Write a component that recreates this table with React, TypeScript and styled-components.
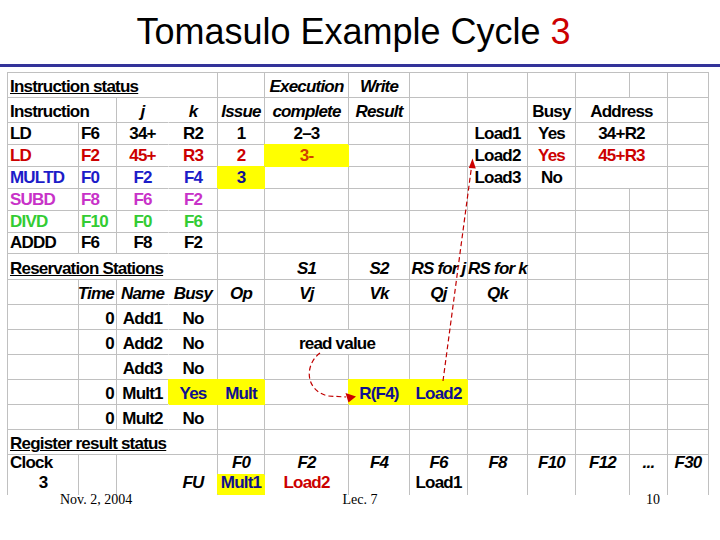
import React from 'react';
import styled, { createGlobalStyle, css } from 'styled-components';

const GlobalStyle = createGlobalStyle`
  html, body { margin: 0; padding: 0; background: #ffffff; }
  body { width: 720px; height: 540px; overflow: hidden; }
`;

const GRID = '#c0c0c0';
const RED = '#cc0000';
const BLUE = '#1c1cc8';
const NAVY = '#10108f';
const MAGENTA = '#c832c8';
const GREEN = '#33cc33';
const ORANGE = '#d04000';
const YELLOW = '#ffff00';

const Slide = styled.div`
  position: relative;
  width: 720px;
  height: 540px;
  background: #ffffff;
  font-family: "Liberation Sans", Arial, sans-serif;
`;

const Title = styled.h1`
  margin: 0;
  padding: 11px 13px 0 0;
  font-family: "Liberation Sans", Arial, sans-serif;
  font-weight: normal;
  font-size: 36px;
  line-height: 41px;
  text-align: center;
  color: #000000;
`;

const Accent = styled.span`
  color: ${RED};
`;

const Rule = styled.div`
  margin-top: 12px;
  height: 3px;
  background: #333399;
`;

const Table = styled.div`
  margin: 5px 0 0 7px;
  display: grid;
  width: max-content;
  grid-template-columns: 71px 38px 52px 49px 47px 84px 61px 58px 60px 48px 54px 38px 41px;
  grid-template-rows: 25px 25px 22px 22px 22px 22px 22px 21px 26px 25px 25px 25px 25px 25px 25px 25px 20px 20px;
  border-left: 1px solid ${GRID};
  border-top: 1px solid ${GRID};
`;

type Align = 'l' | 'c' | 'r';

const Cell = styled.div<{
  $span: number;
  $align: Align;
  $italic: boolean;
  $color: string;
  $hl: boolean;
  $hideRight: boolean;
  $last: boolean;
}>`
  grid-column: span ${(p) => p.$span};
  box-sizing: border-box;
  min-width: 0;
  display: flex;
  align-items: flex-end;
  justify-content: ${(p) => (p.$align === 'l' ? 'flex-start' : p.$align === 'r' ? 'flex-end' : 'center')};
  padding: 0 ${(p) => (p.$align === 'r' ? '2px' : '0')} ${(p) => (p.$last ? '3px' : '1px')}
    ${(p) => (p.$align === 'l' ? '2px' : '0')};
  border-right: 1px solid ${(p) => (p.$hideRight ? 'transparent' : GRID)};
  border-bottom: ${(p) => (p.$last ? 'none' : `1px solid ${GRID}`)};
  font-size: 17px;
  line-height: 19px;
  font-weight: bold;
  letter-spacing: -0.8px;
  font-style: ${(p) => (p.$italic ? 'italic' : 'normal')};
  color: ${(p) => p.$color};
  white-space: nowrap;
  ${(p) =>
    p.$hl &&
    css`
      position: relative;
      background: ${YELLOW};
      border-right-color: ${YELLOW};
      border-bottom-color: ${YELLOW};
      box-shadow: -1px -1px 0 0 ${YELLOW};
    `}
`;

const Label = styled.span<{ $underline: boolean }>`
  text-decoration: ${(p) => (p.$underline ? 'underline' : 'none')};
  text-decoration-thickness: 1px;
`;

const Footer = styled.div`
  margin-top: -3px;
  display: grid;
  grid-template-columns: 240px 240px 240px;
  font-family: "Liberation Serif", "Times New Roman", serif;
  font-size: 14px;
  line-height: 16px;
  color: #000000;
`;

const FooterItem = styled.div<{ $align: 'left' | 'center' | 'right' }>`
  text-align: ${(p) => p.$align};
  padding: 0 ${(p) => (p.$align === 'right' ? '60px' : '0')} 0 ${(p) => (p.$align === 'left' ? '60px' : '0')};
`;

const Overlay = styled.svg`
  position: absolute;
  left: 0;
  top: 0;
  pointer-events: none;
`;

type C = { t?: string; s?: number; a?: Align; i?: boolean; c?: string; hl?: boolean; u?: boolean };
type Row = { last?: boolean; cells: C[] };

const E = (n: number): C[] => Array.from({ length: n }, () => ({}));

const colored = (c: string, cells: C[]): C[] => cells.map((x) => ({ c, ...x }));

const rows: Row[] = [
  {
    cells: [
      { t: 'Instruction status', s: 4, a: 'l', u: true },
      {},
      { t: 'Execution', i: true },
      { t: 'Write', i: true },
      ...E(6),
    ],
  },
  {
    cells: [
      { t: 'Instruction', s: 2, a: 'l' },
      { t: 'j', i: true },
      { t: 'k', i: true },
      { t: 'Issue', i: true },
      { t: 'complete', i: true },
      { t: 'Result', i: true },
      {},
      {},
      { t: 'Busy' },
      { t: 'Address', s: 2 },
      {},
    ],
  },
  {
    cells: [
      { t: 'LD', a: 'l' },
      { t: 'F6', a: 'l' },
      { t: '34+' },
      { t: 'R2' },
      { t: '1' },
      { t: '2\u20133' },
      {},
      {},
      { t: 'Load1' },
      { t: 'Yes' },
      { t: '34+R2', s: 2 },
      {},
    ],
  },
  {
    cells: [
      ...colored(RED, [{ t: 'LD', a: 'l' }, { t: 'F2', a: 'l' }, { t: '45+' }, { t: 'R3' }, { t: '2' }]),
      { t: '3-', hl: true, c: ORANGE },
      {},
      {},
      { t: 'Load2' },
      { t: 'Yes', c: RED },
      { t: '45+R3', s: 2, c: RED },
      {},
    ],
  },
  {
    cells: [
      ...colored(BLUE, [{ t: 'MULTD', a: 'l' }, { t: 'F0', a: 'l' }, { t: 'F2' }, { t: 'F4' }]),
      { t: '3', hl: true, c: NAVY },
      {},
      {},
      {},
      { t: 'Load3' },
      { t: 'No' },
      { s: 2 },
      {},
    ],
  },
  { cells: [...colored(MAGENTA, [{ t: 'SUBD', a: 'l' }, { t: 'F8', a: 'l' }, { t: 'F6' }, { t: 'F2' }]), ...E(9)] },
  { cells: [...colored(GREEN, [{ t: 'DIVD', a: 'l' }, { t: 'F10', a: 'l' }, { t: 'F0' }, { t: 'F6' }]), ...E(9)] },
  { cells: [{ t: 'ADDD', a: 'l' }, { t: 'F6', a: 'l' }, { t: 'F8' }, { t: 'F2' }, ...E(9)] },
  {
    cells: [
      { t: 'Reservation Stations', s: 4, a: 'l', u: true },
      {},
      { t: 'S1', i: true },
      { t: 'S2', i: true },
      { t: 'RS for j', i: true },
      { t: 'RS for k', i: true },
      ...E(4),
    ],
  },
  {
    cells: [
      {},
      { t: 'Time', a: 'r', i: true },
      { t: 'Name', i: true },
      { t: 'Busy', i: true },
      { t: 'Op', i: true },
      { t: 'Vj', i: true },
      { t: 'Vk', i: true },
      { t: 'Qj', i: true },
      { t: 'Qk', i: true },
      ...E(4),
    ],
  },
  { cells: [{}, { t: '0', a: 'r' }, { t: 'Add1' }, { t: 'No' }, ...E(9)] },
  { cells: [{}, { t: '0', a: 'r' }, { t: 'Add2' }, { t: 'No' }, {}, { t: 'read value', s: 2 }, ...E(6)] },
  { cells: [{}, {}, { t: 'Add3' }, { t: 'No' }, ...E(9)] },
  {
    cells: [
      {},
      { t: '0', a: 'r' },
      { t: 'Mult1' },
      { t: 'Yes', hl: true, c: NAVY },
      { t: 'Mult', hl: true, c: NAVY },
      {},
      { t: 'R(F4)', hl: true, c: NAVY },
      { t: 'Load2', hl: true, c: NAVY },
      ...E(5),
    ],
  },
  { cells: [{}, { t: '0', a: 'r' }, { t: 'Mult2' }, { t: 'No' }, ...E(9)] },
  { cells: [{ t: 'Register result status', s: 4, a: 'l', u: true }, ...E(9)] },
  {
    last: true,
    cells: [
      { t: 'Clock', a: 'l' },
      {},
      {},
      {},
      ...['F0', 'F2', 'F4', 'F6', 'F8', 'F10', 'F12', '...', 'F30'].map((t) => ({ t, i: true })),
    ],
  },
  {
    last: true,
    cells: [
      { t: '3' },
      {},
      {},
      { t: 'FU', i: true },
      { t: 'Mult1', hl: true, c: NAVY },
      { t: 'Load2', c: RED },
      {},
      { t: 'Load1' },
      ...E(5),
    ],
  },
];

function renderRow(row: Row, ri: number) {
  let col = 0;
  return row.cells.map((cell, ci) => {
    const span = cell.s ?? 1;
    const start = col;
    col += span;
    const end = start + span; // exclusive, 1-based end column index equals `end`
    return (
      <Cell
        key={`${ri}-${ci}`}
        $span={span}
        $align={cell.a ?? 'c'}
        $italic={!!cell.i}
        $color={cell.c ?? '#000000'}
        $hl={!!cell.hl}
        $hideRight={end === 3}
        $last={!!row.last}
      >
        {cell.t ? <Label $underline={!!cell.u}>{cell.t}</Label> : null}
      </Cell>
    );
  });
}

export default function App() {
  return (
    <Slide>
      <GlobalStyle />
      <Title>
        Tomasulo Example Cycle <Accent>3</Accent>
      </Title>
      <Rule />
      <Table>{rows.map((r, i) => renderRow(r, i))}</Table>
      <Footer>
        <FooterItem $align="left">Nov. 2, 2004</FooterItem>
        <FooterItem $align="center">Lec. 7</FooterItem>
        <FooterItem $align="right">10</FooterItem>
      </Footer>
      <Overlay width={720} height={540} viewBox="0 0 720 540">
        <line x1="443" y1="381" x2="471.5" y2="167" stroke="#c00000" strokeWidth="1.2" strokeDasharray="5 3" />
        <polygon points="472.5,158.5 468.8,168 475.8,168.5" fill="#cc0000" />
        <path
          d="M320 353 C305 364 304 390 328 396 L346 397"
          fill="none"
          stroke="#c00000"
          strokeWidth="1.2"
          strokeDasharray="5 3"
        />
        <polygon points="345.5,393 356,396.5 348.5,402.5" fill="#cc0000" />
      </Overlay>
    </Slide>
  );
}
